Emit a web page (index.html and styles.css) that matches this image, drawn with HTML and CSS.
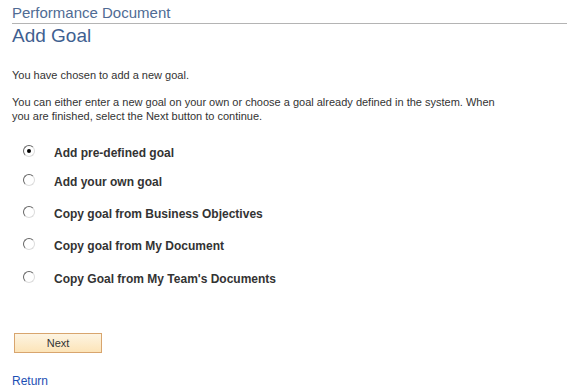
FILE: index.html
```html
<!DOCTYPE html>
<html lang="en">
<head>
    <meta charset="UTF-8">
    <title>Add Goal</title>
    <link rel="stylesheet" href="styles.css">
</head>
<body>
    <div class="page">
        <div class="page-header">
            <div class="page-subtitle">Performance Document</div>
        </div>
        <h1 class="page-title">Add Goal</h1>

        <p class="intro">You have chosen to add a new goal.</p>
        <p class="intro intro-long">You can either enter a new goal on your own or choose a goal already defined in the system. When you are finished, select the Next button to continue.</p>

        <div class="options">
            <label class="option">
                <span class="radio checked"></span>
                <span class="option-label">Add pre-defined goal</span>
            </label>
            <label class="option">
                <span class="radio"></span>
                <span class="option-label">Add your own goal</span>
            </label>
            <label class="option">
                <span class="radio"></span>
                <span class="option-label">Copy goal from Business Objectives</span>
            </label>
            <label class="option">
                <span class="radio"></span>
                <span class="option-label">Copy goal from My Document</span>
            </label>
            <label class="option">
                <span class="radio"></span>
                <span class="option-label">Copy Goal from My Team's Documents</span>
            </label>
        </div>

        <button class="next-button">Next</button>

        <a class="return-link" href="#">Return</a>
    </div>
</body>
</html>
```

FILE: styles.css
```css
* {
    margin: 0;
    padding: 0;
    box-sizing: border-box;
}

body {
    font-family: 'Liberation Sans', Arial, sans-serif;
    font-size: 11px;
    color: #333333;
    background: #ffffff;
}

.page {
    padding: 2px 11px 0 12px;
}

.page-header {
    border-bottom: 1px solid #b4b4b4;
}

.page-subtitle {
    font-size: 15px;
    line-height: 21px;
    color: #4f6b94;
}

.page-title {
    font-size: 19px;
    line-height: 23px;
    font-weight: normal;
    color: #3f5f91;
}

.intro {
    line-height: 14px;
    max-width: 500px;
    margin-top: 21px;
}

.intro-long {
    margin-top: 13px;
}

.options {
    display: grid;
    grid-template-rows: 29px 32px 32px 33px 33px;
    margin-top: 21px;
    padding-left: 11px;
}

.option {
    display: flex;
    align-items: flex-start;
    gap: 19px;
}

.option-label {
    font-size: 12px;
    font-weight: bold;
    line-height: 15px;
    padding-top: 2px;
}

.radio {
    width: 12px;
    height: 12px;
    margin-top: 1px;
    border-radius: 50%;
    border: 1px solid;
    border-color: #666666 #dcdcdc #dcdcdc #666666;
    background: #ffffff;
    display: flex;
    align-items: center;
    justify-content: center;
    flex-shrink: 0;
}

.radio.checked::after {
    content: '';
    width: 4px;
    height: 4px;
    border-radius: 50%;
    background: #000000;
}

.next-button {
    display: block;
    margin-top: 30px;
    margin-left: 2px;
    width: 88px;
    height: 20px;
    font-family: 'Liberation Sans', Arial, sans-serif;
    font-size: 11px;
    color: #333333;
    border: 1px solid #d8a56e;
    background: linear-gradient(#fdf4e2, #fce4b8);
    cursor: pointer;
}

.return-link {
    display: inline-block;
    margin-top: 21px;
    font-size: 12px;
    color: #1c4fb4;
    text-decoration: none;
    line-height: 15px;
}
```
